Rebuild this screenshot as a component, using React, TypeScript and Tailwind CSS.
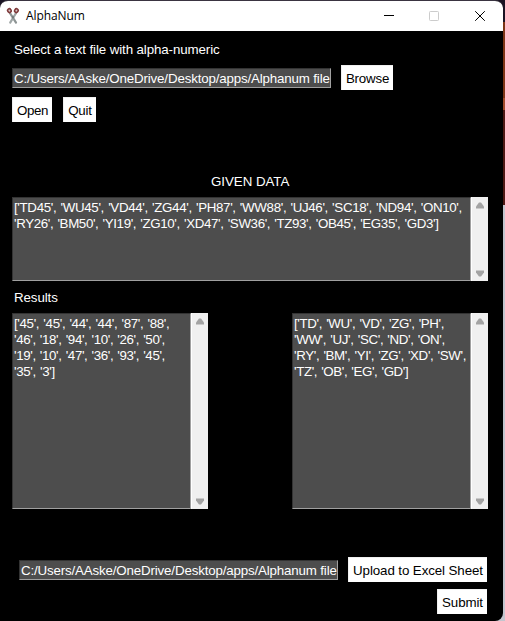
import type { ReactNode } from "react";

const filePath = "C:/Users/AAske/OneDrive/Desktop/apps/Alphanum file";

type Line = [text: string, tracking: string];

function Scissors() {
  return (
    <svg width="14" height="18" viewBox="0 0 14 18" className="ml-[6px] shrink-0">
      <path d="M4 6.2L10 15.6" stroke="#8d9494" strokeWidth="2.2" strokeLinecap="round" />
      <path d="M10 6.2L4.2 15.6" stroke="#a0a7a7" strokeWidth="2.2" strokeLinecap="round" />
      <path d="M7 9.2v2.4" stroke="#555c5c" strokeWidth="1.2" />
      <ellipse cx="3.4" cy="3.6" rx="1.7" ry="1.9" transform="rotate(-35 3.4 3.6)" fill="#d9c4c4" stroke="#7f3a3b" strokeWidth="1.6" />
      <ellipse cx="10.4" cy="3.6" rx="1.7" ry="1.9" transform="rotate(35 10.4 3.6)" fill="#d9c4c4" stroke="#7f3a3b" strokeWidth="1.6" />
    </svg>
  );
}

function TitleBar() {
  return (
    <header className="flex h-[30px] shrink-0 items-center bg-white text-black">
      <Scissors />
      <h1 className="ml-[6px] font-['Open_Sans','Noto_Sans',sans-serif] text-[12px] leading-[16px] tracking-[-0.1px]">AlphaNum</h1>
      <div className="ml-auto flex items-center pr-[18px]">
        <svg width="10" height="10" viewBox="0 0 10 10"><path d="M0 4.5H10" stroke="#000" /></svg>
        <svg width="10" height="10" viewBox="0 0 10 10" className="ml-[35px]"><rect x=".5" y=".5" width="9" height="9" rx=".8" fill="none" stroke="#ccc" /></svg>
        <svg width="10" height="10" viewBox="0 0 10 10" className="ml-[36px]"><path d="M.2 .2L9.8 9.8M9.8 .2L.2 9.8" stroke="#000" fill="none" /></svg>
      </div>
    </header>
  );
}

function Button({ children, className }: { children: ReactNode; className: string }) {
  return (
    <button className={`flex h-[25px] shrink-0 items-center justify-center whitespace-nowrap border-t border-l border-[#f0f0f0] bg-white pt-px text-black ${className}`}>
      {children}
    </button>
  );
}

function Entry() {
  return (
    <div className="flex h-[20px] w-[319px] shrink-0 items-center overflow-hidden whitespace-nowrap border border-t-[#333] border-r-[#a0a0a0] border-b-[#a0a0a0] border-l-[#333] bg-[#4d4d4d] pt-[2px] pl-px tracking-[-0.16px]">
      {filePath}
    </div>
  );
}

function TextPane({ lines, className }: { lines: Line[]; className: string }) {
  return (
    <div className={`flex ${className}`}>
      <div className="min-w-0 flex-1 overflow-hidden border border-t-[#333] border-r-[#a0a0a0] border-b-[#a0a0a0] border-l-[#333] bg-[#4d4d4d] pt-[2px] pl-px">
        {lines.map(([text, tracking]) => (
          <p key={text} className={`whitespace-pre leading-[16px] [word-spacing:0.8px] ${tracking}`}>{text}</p>
        ))}
      </div>
      <div className="flex w-[17px] shrink-0 flex-col items-center justify-between border-l border-white bg-[#f0f0f0] pt-[5px] pb-[4px]">
        <svg width="8" height="7" viewBox="0 0 8 7"><path d="M3 .5h2L8 4.5V6.5H0V4.5Z" fill="#a3a3a3" /></svg>
        <svg width="8" height="7" viewBox="0 0 8 7"><path d="M0 .5H8V2.5L5 6.5H3L0 2.5Z" fill="#a3a3a3" /></svg>
      </div>
    </div>
  );
}

const given: Line[] = [
  ["['TD45', 'WU45', 'VD44', 'ZG44', 'PH87', 'WW88', 'UJ46', 'SC18', 'ND94', 'ON10',", "tracking-[-0.34px]"],
  ["'RY26', 'BM50', 'YI19', 'ZG10', 'XD47', 'SW36', 'TZ93', 'OB45', 'EG35', 'GD3']", "tracking-[-0.37px]"],
];

const numbers: Line[] = [
  ["['45', '45', '44', '44', '87', '88',", "tracking-[-0.35px]"],
  ["'46', '18', '94', '10', '26', '50',", "tracking-[-0.38px]"],
  ["'19', '10', '47', '36', '93', '45',", "tracking-[-0.38px]"],
  ["'35', '3']", "tracking-[-0.36px]"],
];

const letters: Line[] = [
  ["['TD', 'WU', 'VD', 'ZG', 'PH',", "tracking-[-0.37px]"],
  ["'WW', 'UJ', 'SC', 'ND', 'ON',", "tracking-[-0.36px]"],
  ["'RY', 'BM', 'YI', 'ZG', 'XD', 'SW',", "tracking-[-0.36px]"],
  ["'TZ', 'OB', 'EG', 'GD']", "tracking-[-0.4px]"],
];

export default function App() {
  return (
    <div className="flex h-[621px] w-[505px] overflow-hidden bg-[linear-gradient(to_bottom,#1b1424_0_22px,#7c3516_22px_98px,#a14b2b_98px_110px,#4d1814_110px_205px,#c3c5ce_205px_621px)] font-['Liberation_Sans',Arial,sans-serif] text-[13.33px] leading-[16px]">
      <div className="flex w-[503px] flex-col overflow-hidden rounded-t-[8px] rounded-br-[8px] border-t border-[#3a3441] bg-black text-white">
        <TitleBar />
        <main className="flex flex-col">
          <p className="mt-[11px] ml-[14px] tracking-[-0.11px]">Select a text file with alpha-numeric</p>
          <div className="mt-[7px] ml-[12px] flex h-[25px] items-center gap-[10px]">
            <Entry />
            <Button className="w-[52px] tracking-[-0.2px]">Browse</Button>
          </div>
          <div className="mt-[7px] ml-[12px] flex gap-[11px]">
            <Button className="w-[40px] tracking-[-0.4px]">Open</Button>
            <Button className="w-[33px] tracking-[-0.2px]">Quit</Button>
          </div>
          <h2 className="mt-[52px] ml-[211px] tracking-[-0.05px]">GIVEN DATA</h2>
          <TextPane className="mt-[7px] ml-[12px] h-[84px] w-[476px]" lines={given} />
          <h2 className="mt-[9px] ml-[14px] tracking-[-0.1px]">Results</h2>
          <div className="mt-[7px] ml-[12px] flex gap-[84px]">
            <TextPane className="h-[196px] w-[196px]" lines={numbers} />
            <TextPane className="h-[196px] w-[196px]" lines={letters} />
          </div>
          <div className="mt-[48px] ml-[19px] flex h-[25px] items-center gap-[10px]">
            <Entry />
            <Button className="w-[139px] tracking-[-0.1px]">Upload to Excel Sheet</Button>
          </div>
          <div className="mt-[7px] mr-[16px] flex justify-end">
            <Button className="w-[50px] tracking-[-0.1px]">Submit</Button>
          </div>
        </main>
      </div>
    </div>
  );
}
